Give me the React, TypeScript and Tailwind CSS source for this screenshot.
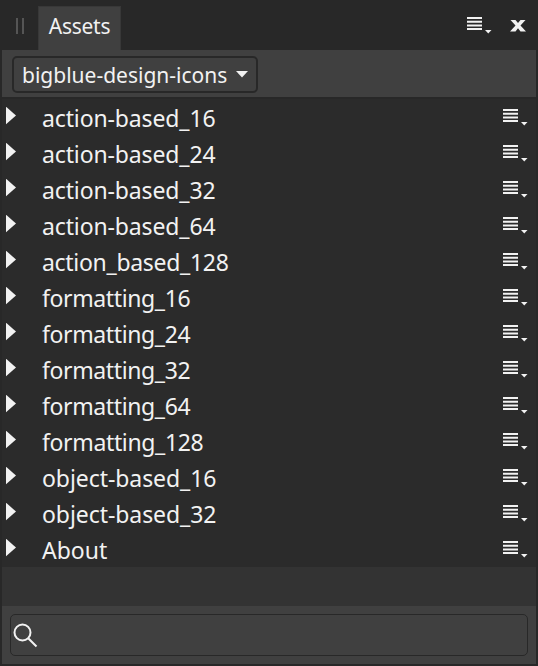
type IconProps = { className?: string };

const categories = [
  { name: "action-based_16", tracking: "tracking-[-0.13px]" },
  { name: "action-based_24", tracking: "tracking-[-0.13px]" },
  { name: "action-based_32", tracking: "tracking-[-0.13px]" },
  { name: "action-based_64", tracking: "tracking-[-0.13px]" },
  { name: "action_based_128", tracking: "tracking-[-0.3px]" },
  { name: "formatting_16", tracking: "tracking-[-0.38px]" },
  { name: "formatting_24", tracking: "tracking-[-0.38px]" },
  { name: "formatting_32", tracking: "tracking-[-0.38px]" },
  { name: "formatting_64", tracking: "tracking-[-0.38px]" },
  { name: "formatting_128", tracking: "tracking-[-0.36px]" },
  { name: "object-based_16", tracking: "tracking-[-0.07px]" },
  { name: "object-based_32", tracking: "tracking-[-0.07px]" },
  { name: "About", tracking: "tracking-[0px]" },
];

function MenuIcon({ className = "" }: IconProps) {
  return (
    <svg className={className} width="25" height="17" viewBox="0 0 25 17" fill="#f2f2f2">
      <path d="M0 0h15v2H0zM0 3.800h15v2H0zM0 7.400h15v2H0zM0 11h15v2H0z" />
      <path d="M18 13h6.500l-3.250 3.500z" />
    </svg>
  );
}

function ExpandIcon() {
  return (
    <svg width="10" height="18" viewBox="0 0 10 18" fill="#f2f2f2">
      <path d="M0 -0.300L10 8.500L0 17.300z" />
    </svg>
  );
}

export default function App() {
  return (
    <div className="flex h-[666px] w-[538px] flex-col bg-[#282828] px-[2px] pb-[2px] font-['Noto_Sans','Open_Sans',sans-serif] text-[23px] text-[#f2f2f2]">
      <header className="flex h-[50px] shrink-0 items-end">
        <div className="mb-4 ml-[14px] flex h-4 w-2 justify-between">
          <span className="w-[2px] bg-[#555555]" />
          <span className="w-[2px] bg-[#555555]" />
        </div>
        <div className="ml-[14px] flex h-[44px] w-[83px] justify-center border-x border-t border-[#383838] bg-[#404040] pt-[3px] text-[21px] leading-[32px] tracking-[-0.25px]">
          <span>Assets</span>
        </div>
        <div className="mb-[16px] ml-auto mr-[9px] flex items-center gap-[18px]">
          <MenuIcon />
          <svg width="17" height="12" viewBox="0 0 17 12" fill="#f2f2f2">
            <path d="M.5 0h5l2.500 3 2.500-3h5l-5 5.500 5.500 6h-5.500L8 8.300 5.500 11.500H0l5.500-6z" />
          </svg>
        </div>
      </header>

      <div className="h-[47px] shrink-0 bg-[#404040] px-[10px] pt-[6px]">
        <button className="flex h-[37px] w-[246px] items-center justify-between rounded-[5px] border-2 border-[#282828] px-2 text-left text-[21px] leading-[32px]">
          <span className="whitespace-nowrap pt-px">bigblue-design-icons</span>
          <svg className="shrink-0" width="12" height="7" viewBox="0 0 12 7" fill="#f2f2f2">
            <path d="M0 0h12L6 6.500z" />
          </svg>
        </button>
      </div>

      <ul className="mt-[2px] shrink-0 bg-[#2b2b2b]">
        {categories.map((category) => (
          <li key={category.name} className="flex h-9 items-start pl-1 pr-2 pt-2">
            <ExpandIcon />
            <span className={`ml-[26px] mt-[-5px] leading-[32px] ${category.tracking}`}>{category.name}</span>
            <MenuIcon className="ml-auto mt-[2px]" />
          </li>
        ))}
      </ul>

      <div className="h-[39px] shrink-0 bg-[#333333]" />

      <footer className="h-[58px] shrink-0 bg-[#404040] px-2 pt-2">
        <div className="flex h-[42px] items-center rounded-[5px] border border-[#282828] pl-[2px]">
          <svg width="25" height="25" viewBox="0 0 25 25" fill="none" stroke="#f2f2f2" strokeWidth="2">
            <circle cx="9.500" cy="9.500" r="8" />
            <path d="M15.200 15.200L23.500 23.500" />
          </svg>
        </div>
      </footer>
    </div>
  );
}
